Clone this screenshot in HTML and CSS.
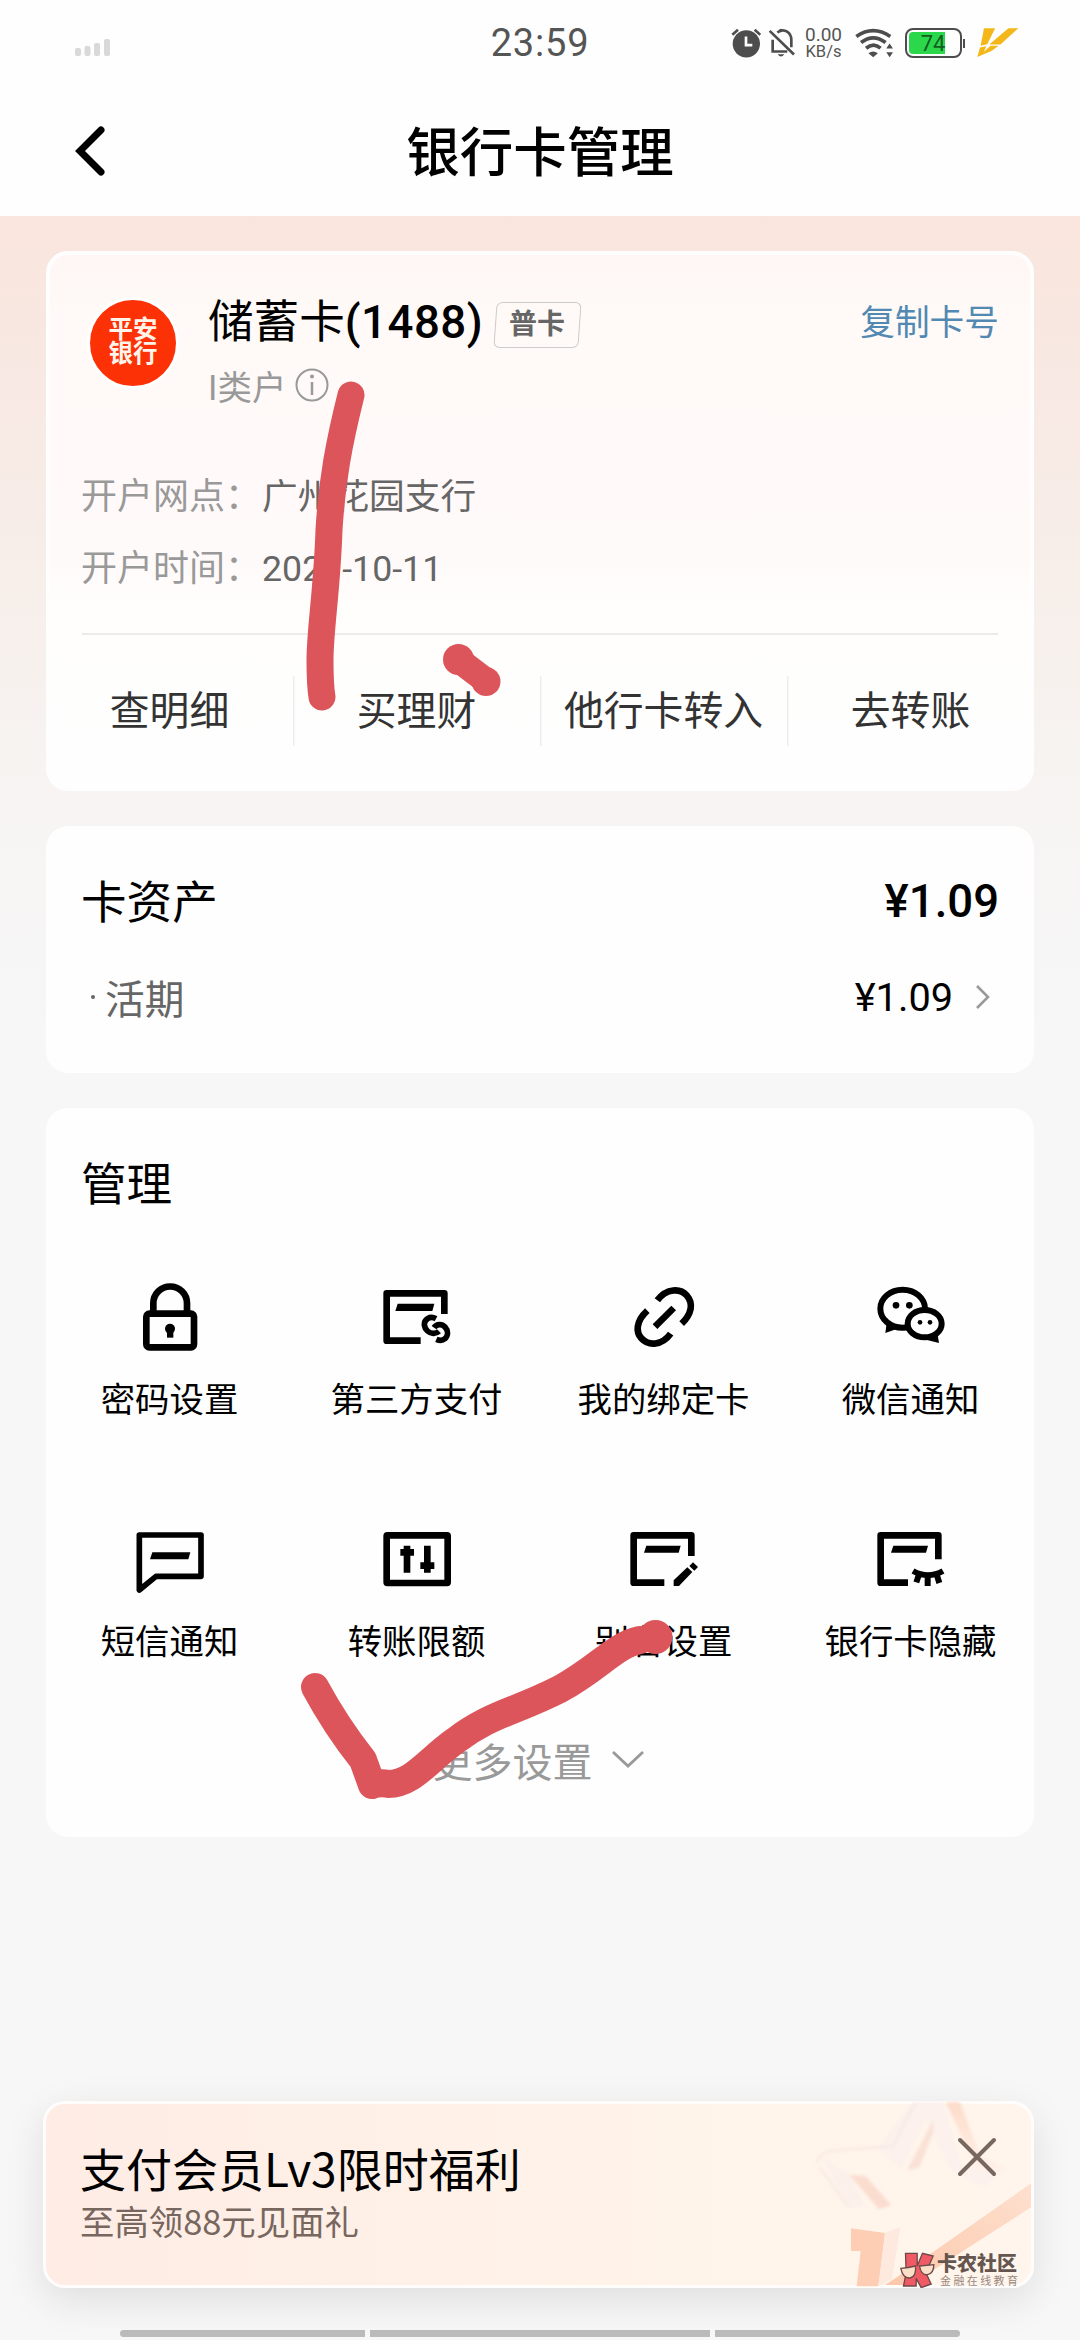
FILE: index.html
```html
<!DOCTYPE html>
<html lang="zh-CN">
<head>
<meta charset="utf-8">
<title>银行卡管理</title>
<link rel="stylesheet" href="styles.css">
</head>
<body>
<div class="screen">
  <header class="header">
    <div class="status">
      <svg class="signal" viewBox="0 0 36 18"><g fill="#d9d9d9"><rect x="0" y="9" width="6" height="8" rx="2"/><rect x="9.500" y="7" width="6" height="10" rx="2"/><rect x="19" y="4" width="6" height="13" rx="2"/><rect x="29" y="0" width="6" height="17" rx="2"/></g></svg>
      <span class="time">23:59</span>
      <div class="status-right">
        <svg class="alarm" viewBox="92 50 90 92"><circle cx="138" cy="100" r="41" fill="#4d4d4d"/><path d="M96 73l17-15M163 58l17 15" stroke="#4d4d4d" stroke-width="8" fill="none"/><path d="M137 78v26h19" stroke="#fff" stroke-width="8" fill="none"/></svg>
        <svg class="bell" viewBox="204 50 84 92"><path d="M218 88v32M214 123h48M232 66c22-16 42 2 42 22v22" stroke="#4d4d4d" stroke-width="8" fill="none"/><path d="M209 61l73 71" stroke="#4d4d4d" stroke-width="8"/><path d="M233 131h20q-10 14-20 0zM236 60q7-10 14 0z" fill="#4d4d4d"/></svg>
        <div class="speed"><span>0.00</span><span>KB/s</span></div>
        <svg class="wifi" viewBox="468 50 116 92"><g fill="none" stroke="#4d4d4d" stroke-width="11"><path d="M472 78q50-34 101 0"/><path d="M486 96q36-28 73 0"/><path d="M501 113q22-18 43 0"/></g><path d="M508 128q14-10 28 0l-14 12z"/><path d="M571 99l10 15h-20zM571 140l10-15h-20z"/></svg>
        <div class="battery"><div class="level"></div><span>74</span></div>
        <svg class="bolt" viewBox="832 48 130 92"><path d="M856 51h34l-24 48-20 5z" fill="#f3b71a"/><path d="M930 51h30l-54 49h-34z" fill="#f3b71a"/><path d="M844 109l19-4-7 17 20-18h24l-20 15-44 19z" fill="#f3b71a"/></svg>
      </div>
    </div>
    <div class="navbar">
      <svg class="back" viewBox="0 0 32 50"><path d="M27 4L6 25l21 21" fill="none" stroke="#000" stroke-width="7" stroke-linecap="round"/></svg>
      <h1>银行卡管理</h1>
    </div>
  </header>

  <main class="content">
    <section class="card account">
      <div class="account-top">
        <div class="logo">平安<br>银行</div>
        <div class="account-name">
          <div class="name-row"><span class="name">储蓄卡<b>(1488)</b></span><span class="tag"><span>普卡</span></span></div>
          <div class="kind">I类户<svg viewBox="0 0 36 36"><circle cx="18" cy="18" r="15.500" fill="none" stroke="#999" stroke-width="2"/><path d="M18 15v13" stroke="#999" stroke-width="2.500"/><circle cx="18" cy="9.500" r="2" fill="#999"/></svg></div>
        </div>
        <a class="copy">复制卡号</a>
      </div>
      <dl class="facts">
        <div><dt>开户网点：</dt><dd>广州花园支行</dd></div>
        <div><dt>开户时间：</dt><dd>2021-10-11</dd></div>
      </dl>
      <nav class="actions"><a>查明细</a><a>买理财</a><a>他行卡转入</a><a>去转账</a></nav>
    </section>

    <section class="card assets">
      <div class="asset-total"><h2>卡资产</h2><b>¥1.09</b></div>
      <div class="asset-line"><span class="dot"></span><span class="asset-name">活期</span><span class="amount">¥1.09</span><svg viewBox="0 0 18 28"><path d="M3 3l11 11L3 25" fill="none" stroke="#999" stroke-width="2.600"/></svg></div>
    </section>

    <section class="card manage">
      <h2>管理</h2>
      <div class="grid">
        <div class="tile"><svg viewBox="160 64 216 216"><rect x="197" y="162" width="143" height="101" rx="9" fill="none" stroke="#000" stroke-width="20"/><path d="M218 160v-29a50 50 0 0 1 101 0v29" fill="none" stroke="#000" stroke-width="20"/><circle cx="268" cy="207" r="15"/><path d="M259 212h19v22h-19z"/></svg><span>密码设置</span></div>
        <div class="tile"><svg viewBox="901 64 216 216"><path d="M1091 163v-62H918v142h102" fill="none" stroke="#000" stroke-width="20" stroke-linejoin="round"/><path d="M951 132h110l-6 22H944z"/><g fill="none" stroke="#000" stroke-width="17"><path d="M1066 177c-18-10-36 2-35 19 2 14 14 26 28 25 7 0 12-2 16-6"/><path d="M1060 204c8-12 24-12 33-2 10 11 10 25 0 35-7 6-17 6-26 2"/></g></svg><span>第三方支付</span></div>
        <div class="tile"><svg viewBox="262 64 216 216"><g fill="none" stroke="#000" stroke-width="20"><path d="M350 122C378 84 420 86 438 107C460 132 452 164 423 192"/><path d="M320 153C284 186 286 218 302 236C324 260 364 258 390 222"/><path d="M343 201l56-56"/></g></svg><span>我的绑定卡</span></div>
        <div class="tile"><svg viewBox="1003 64 216 216"><ellipse cx="1086" cy="147" rx="67" ry="57" fill="#fff" stroke="#000" stroke-width="18"/><path d="M1038 190l-4 30 34-12z"/><circle cx="1066" cy="137" r="10"/><circle cx="1106" cy="137" r="10"/><ellipse cx="1152" cy="192" rx="51" ry="41" fill="#fff" stroke="#000" stroke-width="18"/><path d="M1190 220l5 30-36-9z"/><circle cx="1138" cy="188" r="7"/><circle cx="1168" cy="188" r="7"/></svg><span>微信通知</span></div>
        <div class="tile"><svg viewBox="160 70 216 216"><path d="M176 106h185v124H226l-50 41z" fill="none" stroke="#000" stroke-width="17" stroke-linejoin="round"/><path d="M215 158h114l-6 21H208z"/></svg><span>短信通知</span></div>
        <div class="tile"><svg viewBox="901 70 216 216"><rect x="918" y="107" width="183" height="143" rx="2" fill="none" stroke="#000" stroke-width="20" stroke-linejoin="round"/><path d="M969 219v-51h-10v-20h10v-10h20v10h11v20h-11v51zM1030 138v50h-11v20h11v11h20v-11h11v-20h-11v-50z"/></svg><span>转账限额</span></div>
        <div class="tile"><svg viewBox="262 70 216 216"><path d="M452 169v-62H279v142h92" fill="none" stroke="#000" stroke-width="20" stroke-linejoin="round"/><path d="M317 138h103l-6 21H310z"/><path d="M399 259v-17l41-39 15 14-40 42zM446 199l11-11 15 14-11 11z"/></svg><span>别名设置</span></div>
        <div class="tile"><svg viewBox="1003 70 216 216"><path d="M1193 179v-72h-173v142h82" fill="none" stroke="#000" stroke-width="20" stroke-linejoin="round"/><path d="M1058 138h104l-6 21h-105z"/><path d="M1117 214q45 25 90 0M1135 224l-8 24M1161 228v31M1188 224l8 26" fill="none" stroke="#000" stroke-width="18"/></svg><span>银行卡隐藏</span></div>
      </div>
      <div class="more">更多设置<svg viewBox="0 0 34 20"><path d="M2 2l15 14L32 2" fill="none" stroke="#999" stroke-width="2.800"/></svg></div>
    </section>

    <aside class="banner">
      <svg class="banner-art" viewBox="0 63 762 561">
        <defs>
          <linearGradient id="ribbon" x1="0" y1="1" x2="1" y2="0"><stop offset="0" stop-color="#fcc8ab"/><stop offset="1" stop-color="#fee0cf"/></linearGradient>
          <linearGradient id="beam" x1="0" y1="0" x2="0" y2="1"><stop offset="0" stop-color="#fddcca"/><stop offset="1" stop-color="#fff0e8"/></linearGradient>
          <filter id="soft"><feGaussianBlur stdDeviation="4"/></filter>
        </defs>
        <g filter="url(#soft)">
          <path d="M400 66h90l55 195 130 10-70 50-90-50-78-155-74 150-70-65z" fill="#fbf0ec" opacity=".85"/>
          <path d="M110 250q8-32 45-37l185-15 65-130M120 262l85 120" fill="none" stroke="#f8eae4" stroke-width="8"/>
          <path d="M125 232l85 52 45 95-45 5z" fill="#fcf0eb"/>
          <path d="M497 66h43l60 160 90 47-100-5z" fill="url(#beam)"/>
          <path d="M458 122l-77 150 37-10 42-105z" fill="#f9e1d6"/>
          <path d="M208 284l49 4 77 88-38 12z" fill="#fbddd0"/>
        </g>
        <path d="M753 310v72L390 615h-75l60-40z" fill="url(#ribbon)"/>
        <path d="M213 445l102 14-20 160h-65l12-106h-29z" fill="#fdcdb4"/>
        <path d="M315 459l46-18-25 156-41 22z" fill="#fee9df"/>
      </svg>
      <div class="banner-copy"><strong>支付会员Lv3限时福利</strong><span>至高领88元见面礼</span></div>
      <svg class="close" viewBox="0 0 40 40"><path d="M3 3l34 34M37 3L3 37" stroke="#77675f" stroke-width="4" stroke-linecap="round"/></svg>
      <div class="brand">
        <svg viewBox="360 517 104 108"><g stroke="#6c4a4a" stroke-width="4"><path d="M376 521h35v38l16-38 32 8-22 50 16 34-30 11-15-28v23h-38l8-40z" fill="#ef5a65"/><path d="M362 566q24-1 44-7 3 31-16 36-22 2-28-29zM418 559l43-4q0 26-19 30-19 2-24-26z" fill="#fbe0c7"/></g></svg>
        <div><b>卡农社区</b><span>金融在线教育</span></div>
      </div>
    </aside>
  </main>

  <div class="home"><i></i><i></i><i></i></div>

  <svg class="ink" viewBox="0 0 1080 2340">
    <g fill="none" stroke="#dc555b" stroke-linecap="round" stroke-linejoin="round">
      <path stroke-width="27" d="M351 395C339 443 332 480 329 530C327 590 320 630 320 660Q320 685 322 697"/>
      <path stroke-width="26" d="M460 661L485 680"/>
      <path stroke-width="28" d="M315 1687Q336 1726 363 1760L372 1785Q380 1782 388 1784C413 1784 428 1760 455 1741C490 1714 515 1712 560 1689C600 1667 615 1645 640 1640"/>
    </g>
    <g fill="#dc555b"><circle cx="458.500" cy="659.500" r="15.500"/><circle cx="486" cy="681.500" r="14.500"/><circle cx="655.500" cy="1637" r="17"/></g>
  </svg>
</div>
</body>
</html>
```

FILE: styles.css
```css
* { box-sizing: border-box; margin: 0; padding: 0; }
body {
  width: 1080px;
  font-family: Roboto, "Noto Sans CJK SC", sans-serif;
  color: #000;
  background: #f7f7f7;
}
svg { display: block; flex: none; }
h1, h2 { font-weight: 400; }

.screen {
  position: relative;
  height: 2340px;
  display: flex;
  flex-direction: column;
  overflow: hidden;
  background: linear-gradient(#f9e5dd 216px, #f8e9e4 400px, #f7eee9 560px, #f7f5f4 830px, #f7f7f8 1090px);
}
.header { height: 216px; background: #fefefe; }

.status {
  height: 86px;
  padding: 0 63px 0 75px;
  display: grid;
  grid-template-columns: 405px 120px 1fr;
  align-items: center;
}
.signal { width: 36px; height: 18px; margin-top: 10px; }
.time {
  text-align: center;
  font-size: 38px;
  line-height: 44px;
  letter-spacing: .8px;
  color: #555;
}
.status-right { display: flex; align-items: center; height: 44px; margin-left: 130.500px; margin-top: -1px; }
.alarm { width: 30px; height: 31px; }
.bell { width: 28px; height: 31px; margin-left: 7px; }
.speed {
  width: 38px;
  margin-left: 9px;
  display: flex;
  flex-direction: column;
  align-items: center;
  font-size: 19px;
  line-height: 17px;
  color: #555;
}
.speed span:last-child { font-size: 16.500px; }
.wifi { width: 39px; height: 31px; margin-left: 12px; fill: #4d4d4d; }
.battery {
  position: relative;
  width: 57px;
  height: 30px;
  margin-left: 11px;
  padding: 2px;
  border: 2px solid #4d4d4d;
  border-radius: 8px;
}
.battery::after {
  content: "";
  position: absolute;
  right: -5px;
  top: 9px;
  width: 2px;
  height: 9px;
  background: #4d4d4d;
}
.level { width: 36px; height: 22px; border-radius: 4px 0 0 4px; background: #2bd84b; }
.battery span {
  position: absolute;
  inset: 0;
  text-align: center;
  font-size: 22px;
  line-height: 27px;
  color: #155c20;
}
.bolt { width: 43px; height: 31px; margin-left: 14px; }

.navbar {
  height: 130px;
  padding: 0 74px;
  display: grid;
  grid-template-columns: 100px 1fr 100px;
  align-items: center;
}
.back { width: 32px; height: 50px; }
.navbar h1 {
  text-align: center;
  font-size: 53.500px;
  font-weight: 500;
  line-height: 80px;
  padding-top: 5px;
}

.content { padding: 35px 46px 0; display: flex; flex-direction: column; gap: 35px; }
.card { border-radius: 22px; background: #fefefe; }

.account {
  height: 540px;
  border: 4px solid #fefefe;
  background: linear-gradient(#fef6f4, #fffaf7 60px, #fffafa 310px, #fffefd 350px, #fefefe);
}
.account-top { display: flex; height: 188px; padding: 37px 31px 0 37px; }
.logo {
  width: 92px;
  height: 92px;
  margin-top: 5px;
  padding-top: 18px;
  border: 3px solid #fff;
  border-radius: 50%;
  background: #fc3105;
  color: #fff4ea;
  text-align: center;
  font-size: 24.500px;
  font-weight: 700;
  line-height: 24px;
}
.account-name { flex: 1; margin-left: 29px; }
.name-row { display: flex; align-items: center; height: 62px; }
.name { font-size: 45.600px; line-height: 62px; white-space: nowrap; }
.name b { font-weight: 500; letter-spacing: .5px; }
.tag {
  width: 85px;
  height: 46px;
  margin: 3px 0 0 12px;
  border: 1.500px solid #ccc;
  border-radius: 6px;
  transform: skewX(-4deg);
  text-align: center;
  font-size: 28px;
  font-weight: 700;
  line-height: 44px;
  color: #666;
}
.tag span { display: inline-block; transform: skewX(4deg); }
.kind {
  display: flex;
  align-items: center;
  height: 46px;
  margin-top: 8px;
  font-size: 34.500px;
  color: #999;
}
.kind svg { width: 36px; height: 36px; margin-left: 8px; }
.copy { font-size: 34.700px; line-height: 62px; color: #5289b2; }

.facts { padding: 18px 32px 0; height: 190px; font-size: 36px; }
.facts div { display: flex; height: 72px; line-height: 72px; }
.facts dt { color: #999; margin: 0 1px 0 -1px; }
.facts dd { color: #666; font-size: 35.700px; }

.actions {
  position: relative;
  display: grid;
  grid-template-columns: repeat(4, 247px);
  margin: 0 -4px;
  padding-top: 43px;
}
.actions::before {
  content: "";
  position: absolute;
  left: 36px;
  right: 36px;
  top: 0;
  height: 2px;
  background: #ebebeb;
}
.actions a { height: 70px; line-height: 72px; text-align: center; font-size: 39.800px; color: #333; }
.actions a + a { box-shadow: inset 1.500px 0 #ededed; }

.assets { height: 247px; padding: 41px 35px 0; }
.asset-total { display: flex; justify-content: space-between; line-height: 70px; font-size: 45.500px; }
.asset-total h2, .manage h2 { font-size: 45.600px; }
.asset-total h2 { line-height: 73px; }
.asset-total b { font-weight: 500; }
.asset-line { display: flex; align-items: center; height: 114px; font-size: 39.700px; padding-right: 7px; }
.dot { width: 4px; height: 4px; border-radius: 50%; margin-left: 10px; background: #666; }
.asset-name { margin-left: 10px; margin-top: -2px; color: #666; }
.amount { margin-left: auto; }
.asset-line svg { width: 18px; height: 28px; margin-left: 21px; }

.manage { height: 729px; padding-top: 43px; }
.manage h2 { padding-left: 35px; line-height: 70px; }
.grid {
  display: grid;
  grid-template-columns: repeat(4, 1fr);
  grid-auto-rows: 242px;
  margin-top: 60px;
}
.tile { display: flex; flex-direction: column; align-items: center; }
.tile svg { width: 72px; height: 72px; }
.tile span { margin-top: 22px; line-height: 51px; font-size: 34.400px; white-space: nowrap; }
.more {
  display: flex;
  align-items: center;
  justify-content: center;
  height: 50px;
  margin: -30px 3px 0 0;
  font-size: 40px;
  color: #999;
}
.more svg { width: 34px; height: 20px; margin-left: 18px; }

.banner {
  position: relative;
  height: 187px;
  margin: 229px 0 0 -3px;
  padding: 35px 0 0 34px;
  border: 3px solid #fffdfb;
  border-radius: 22px;
  background: linear-gradient(90deg, #feece5, #fff4e9 65%, #fff5ec);
  box-shadow: 0 12px 40px rgba(0, 0, 0, .1);
  font-family: "Noto Sans CJK SC", sans-serif;
}
.banner-art { position: absolute; right: -3px; top: -3px; width: 254px; height: 187px; border-radius: 0 22px 22px 0; }
.banner-copy { position: relative; display: flex; flex-direction: column; }
.banner-copy strong { font-size: 46px; font-weight: 400; line-height: 56px; }
.banner-copy span { font-size: 34.400px; line-height: 50px; color: #77675f; }
.close { position: absolute; right: 34px; top: 33px; width: 40px; height: 40px; }
.brand { position: absolute; right: 12px; bottom: -3px; display: flex; gap: 2px; }
.brand svg { width: 35px; height: 36px; }
.brand div { width: 82px; color: #655650; white-space: nowrap; }
.brand b { display: block; font-size: 20px; font-weight: 900; line-height: 22px; }
.brand span { display: block; padding-left: 3px; font-size: 11px; line-height: 12px; letter-spacing: 2.400px; color: #998980; }

.home { display: flex; gap: 5px; width: 840px; height: 7px; margin: auto auto 3px; }
.home i { flex: 245; background: #bbb; }
.home i:nth-child(2) { flex: 340; }
.home i:first-child { border-radius: 4px 0 0 4px; }
.home i:last-child { border-radius: 0 4px 4px 0; }

.ink { position: absolute; inset: 0; width: 1080px; height: 2340px; pointer-events: none; }
```
